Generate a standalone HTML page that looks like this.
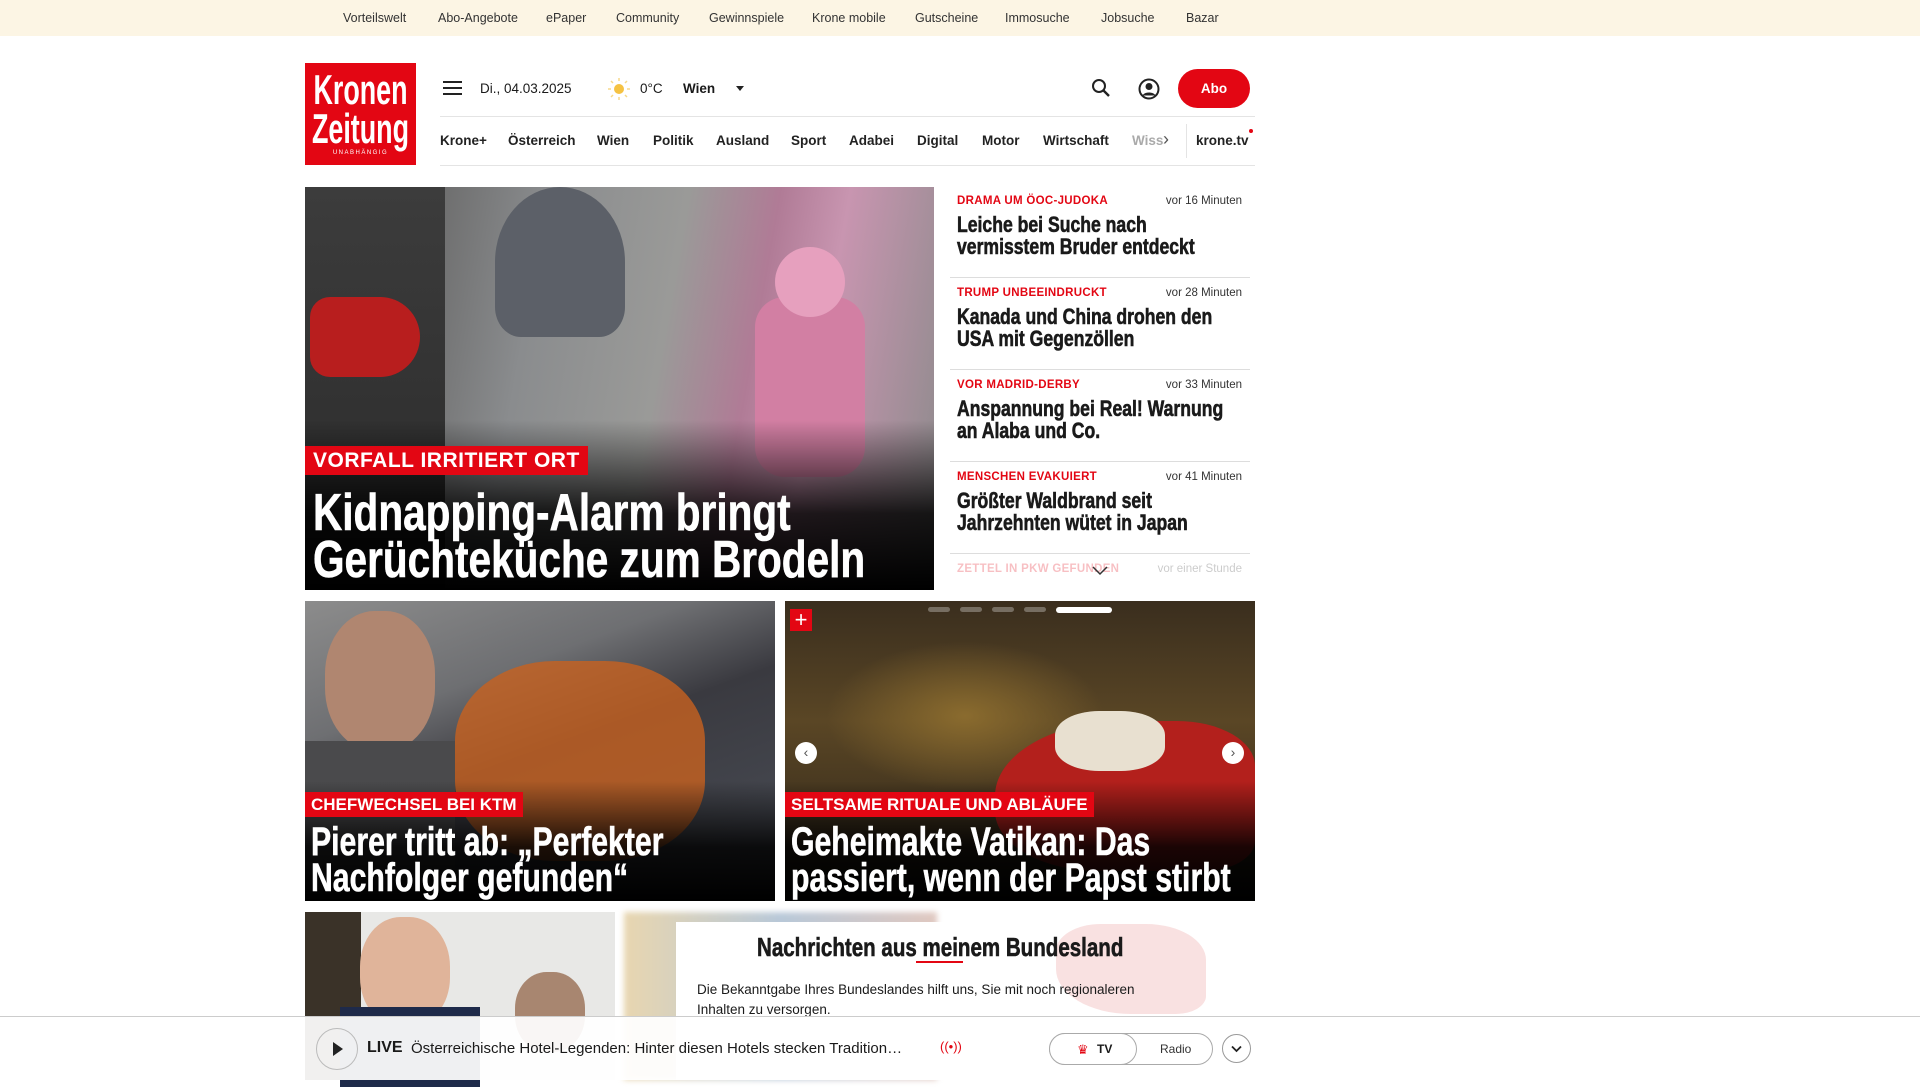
<!DOCTYPE html>
<html><head><meta charset="utf-8">
<style>
*{margin:0;padding:0;box-sizing:border-box}
body{width:1920px;height:1080px;overflow:hidden;background:#fff;font-family:"Liberation Sans",sans-serif;color:#1a1a1a;position:relative}
.abs{position:absolute}
.top{left:0;top:0;width:1920px;height:36px;background:#fcf5e4}
.top span{position:absolute;top:11px;font-size:12.5px;color:#333}
.cond{font-family:"Liberation Sans",sans-serif;font-weight:bold;white-space:nowrap;transform-origin:left top;-webkit-text-stroke:.6px currentColor}
.logo{left:305px;top:63px;width:111px;height:102px;background:#e30613;color:#fff;text-align:center;overflow:hidden}
.nav span{position:absolute;top:133px;font-size:13.5px;font-weight:bold;color:#222}
.hero{left:305px;top:187px;width:629px;height:403px;overflow:hidden;background:linear-gradient(100deg,#4a4a4a 0%,#6b6b6b 18%,#8a8c8e 35%,#9a9a98 55%,#b07b96 68%,#c895b0 78%,#8a8a8a 100%)}
.label{background:#e30613;color:#fff;font-weight:bold;position:absolute}
.shade{position:absolute;left:0;right:0;bottom:0;background:linear-gradient(transparent,rgba(0,0,0,.85) 55%,#000)}
.list .it{position:absolute;left:950px;width:300px;height:92px;border-bottom:1px solid #ddd}
.kick{position:absolute;left:7px;top:9px;color:#e30613;font-size:11.5px;font-weight:bold;letter-spacing:.3px}
.time{position:absolute;right:8px;top:9px;color:#333;font-size:11.5px}
.hl{position:absolute;left:7px;top:28px;font-size:22px;line-height:22px;color:#1a1a1a;transform:scaleX(.8)}
.card{position:absolute;top:601px;width:470px;height:300px;overflow:hidden}
.bar{left:0;top:1016px;width:1920px;height:64px;background:rgba(255,255,255,.93);border-top:1px solid #ccc}
</style></head><body>

<div class="abs top">
<span style="left:343px">Vorteilswelt</span><span style="left:438px">Abo-Angebote</span><span style="left:546px">ePaper</span><span style="left:616px">Community</span><span style="left:709px">Gewinnspiele</span><span style="left:812px">Krone mobile</span><span style="left:915px">Gutscheine</span><span style="left:1005px">Immosuche</span><span style="left:1101px">Jobsuche</span><span style="left:1186px">Bazar</span>
</div>

<div class="abs logo">
<div style="font-weight:bold;font-size:42px;line-height:38px;margin-top:8px;transform:scaleX(.64);white-space:nowrap;margin-left:-40px;margin-right:-40px">Kronen</div>
<div style="font-weight:bold;font-size:42px;line-height:40px;transform:scaleX(.64);white-space:nowrap;margin-left:-40px;margin-right:-40px">Zeitung</div>
<div style="font-size:6px;letter-spacing:1.5px;margin-top:1px">UNABHÄNGIG</div>
</div>

<!-- header row -->
<div class="abs" style="left:443px;top:81px;width:19px;height:2px;background:#222;box-shadow:0 6px 0 #222,0 12px 0 #222"></div>
<div class="abs" style="left:480px;top:81px;font-size:13.5px">Di., 04.03.2025</div>
<svg class="abs" style="left:607px;top:77px" width="24" height="24" viewBox="0 0 24 24"><circle cx="12" cy="12" r="5" fill="#f5c242"/><g stroke="#f7d98a" stroke-width="1.5"><line x1="12" y1="1" x2="12" y2="4"/><line x1="12" y1="20" x2="12" y2="23"/><line x1="1" y1="12" x2="4" y2="12"/><line x1="20" y1="12" x2="23" y2="12"/><line x1="4" y1="4" x2="6" y2="6"/><line x1="18" y1="18" x2="20" y2="20"/><line x1="4" y1="20" x2="6" y2="18"/><line x1="18" y1="6" x2="20" y2="4"/></g></svg>
<div class="abs" style="left:640px;top:81px;font-size:13.5px">0°C</div>
<div class="abs" style="left:683px;top:81px;font-size:13.5px;font-weight:bold">Wien</div>
<div class="abs" style="left:736px;top:86px;border:4px solid transparent;border-top:5px solid #222"></div>
<svg class="abs" style="left:1091px;top:78px" width="20" height="20" viewBox="0 0 20 20"><circle cx="8" cy="8" r="6" fill="none" stroke="#222" stroke-width="2"/><line x1="12.5" y1="12.5" x2="18" y2="18" stroke="#222" stroke-width="2.4"/></svg>
<svg class="abs" style="left:1138px;top:78px" width="22" height="22" viewBox="0 0 22 22"><circle cx="11" cy="11" r="9.5" fill="none" stroke="#222" stroke-width="2"/><circle cx="11" cy="8.5" r="3.5" fill="#222"/><path d="M4.5 17.5c2-4 11-4 13 0" fill="#222"/></svg>
<div class="abs" style="left:1178px;top:69px;width:72px;height:39px;border-radius:20px;background:#e30613;color:#fff;font-weight:bold;font-size:13.5px;text-align:center;line-height:39px">Abo</div>
<div class="abs" style="left:440px;top:116px;width:815px;height:1px;background:#e4e4e4"></div>
<div class="abs" style="left:440px;top:165px;width:815px;height:1px;background:#e4e4e4"></div>
<div class="nav">
<span style="left:440px">Krone+</span><span style="left:508px">Österreich</span><span style="left:597px">Wien</span><span style="left:653px">Politik</span><span style="left:716px">Ausland</span><span style="left:791px">Sport</span><span style="left:849px">Adabei</span><span style="left:917px">Digital</span><span style="left:982px">Motor</span><span style="left:1043px">Wirtschaft</span><span style="left:1132px;color:#aaa">Wiss</span><span style="left:1163px;font-weight:normal;color:#555;font-size:18px;top:129px">›</span><span style="left:1196px">krone.tv</span>
</div>
<div class="abs" style="left:1186px;top:124px;width:1px;height:34px;background:#e4e4e4"></div>
<div class="abs" style="left:1249px;top:129px;width:4px;height:4px;border-radius:2px;background:#e30613"></div>

<!-- hero -->
<div class="abs hero">
<div style="position:absolute;left:0;top:0;width:140px;height:403px;background:linear-gradient(180deg,#3c3c3c,#2a2a2a)"></div>
<div style="position:absolute;left:5px;top:110px;width:110px;height:80px;border-radius:20px 40px 40px 20px;background:#b81e1e"></div>
<div style="position:absolute;left:190px;top:0;width:130px;height:150px;border-radius:50% 50% 20% 20%;background:#5c6068"></div>
<div style="position:absolute;left:450px;top:110px;width:110px;height:180px;border-radius:30px;background:#d27fa3"></div>
<div style="position:absolute;left:470px;top:60px;width:70px;height:70px;border-radius:50%;background:#e6a0be"></div>
<div class="shade" style="height:170px"></div>
<div class="label" style="left:0;top:259px;height:29px;padding:0 8px;font-size:21px;line-height:29px;letter-spacing:.5px">VORFALL IRRITIERT ORT</div>
<div class="cond" style="position:absolute;left:8px;top:303px;color:#fff;font-size:52px;line-height:47px;transform:scaleX(.78)">Kidnapping-Alarm bringt<br>Gerüchteküche zum Brodeln</div>
</div>

<!-- list -->
<div class="list">
<div class="it" style="top:186px"><span class="kick">DRAMA UM ÖOC-JUDOKA</span><span class="time">vor 16 Minuten</span><div class="hl cond">Leiche bei Suche nach<br>vermisstem Bruder entdeckt</div></div>
<div class="it" style="top:278px"><span class="kick">TRUMP UNBEEINDRUCKT</span><span class="time">vor 28 Minuten</span><div class="hl cond">Kanada und China drohen den<br>USA mit Gegenzöllen</div></div>
<div class="it" style="top:370px"><span class="kick">VOR MADRID-DERBY</span><span class="time">vor 33 Minuten</span><div class="hl cond">Anspannung bei Real! Warnung<br>an Alaba und Co.</div></div>
<div class="it" style="top:462px"><span class="kick">MENSCHEN EVAKUIERT</span><span class="time">vor 41 Minuten</span><div class="hl cond">Größter Waldbrand seit<br>Jahrzehnten wütet in Japan</div></div>
<div class="it" style="top:554px;border:none;opacity:.25;height:30px"><span class="kick">ZETTEL IN PKW GEFUNDEN</span><span class="time">vor einer Stunde</span></div>
<svg class="abs" style="left:1092px;top:566px" width="16" height="10" viewBox="0 0 16 10"><path d="M1 1l7 7 7-7" fill="none" stroke="#333" stroke-width="1.5"/></svg>
</div>

<!-- cards -->
<div class="card" style="left:305px;background:linear-gradient(160deg,#8c8c8c 0%,#6e6f72 30%,#3a3a40 50%,#4b4f58 100%)">
<div style="position:absolute;left:20px;top:10px;width:110px;height:140px;border-radius:45%;background:#b08670"></div>
<div style="position:absolute;left:0;top:140px;width:150px;height:160px;background:#4a4a4c"></div>
<div style="position:absolute;left:150px;top:60px;width:250px;height:200px;border-radius:40%;background:#c8611f;opacity:.8"></div>
<div class="shade" style="height:120px"></div>
<div class="label" style="left:0;top:191px;height:25px;padding:0 6px;font-size:17px;line-height:25px">CHEFWECHSEL BEI KTM</div>
<div class="cond" style="position:absolute;left:6px;top:223px;color:#fff;font-size:40px;line-height:36px;transform:scaleX(.755)">Pierer tritt ab: „Perfekter<br>Nachfolger gefunden“</div>
</div>
<div class="card" style="left:785px;background:linear-gradient(180deg,#3a2e1e,#5a4625 40%,#2a2218)">
<div style="position:absolute;left:40px;top:40px;width:280px;height:150px;background:radial-gradient(ellipse,#8a6b2e,transparent 70%)"></div>
<div style="position:absolute;left:210px;top:120px;width:260px;height:150px;border-radius:50% 30% 20% 40%;background:#b3201c"></div>
<div style="position:absolute;left:270px;top:110px;width:110px;height:60px;border-radius:40%;background:#e8e0d0"></div>
<div class="shade" style="height:120px"></div>
<div style="position:absolute;left:5px;top:8px;width:22px;height:22px;background:#e30613;color:#fff;font-size:22px;line-height:21px;text-align:center">+</div>
<div style="position:absolute;left:143px;top:6px;width:22px;height:5px;border-radius:3px;background:rgba(255,255,255,.3);box-shadow:32px 0 0 rgba(255,255,255,.3),64px 0 0 rgba(255,255,255,.3),96px 0 0 rgba(255,255,255,.3)"></div>
<div style="position:absolute;left:271px;top:6px;width:56px;height:6px;border-radius:3px;background:#fff"></div>
<div style="position:absolute;left:10px;top:141px;width:22px;height:22px;border-radius:50%;background:#fff;color:#555;font-size:14px;text-align:center;line-height:21px">‹</div>
<div style="position:absolute;left:437px;top:141px;width:22px;height:22px;border-radius:50%;background:#fff;color:#555;font-size:14px;text-align:center;line-height:21px">›</div>
<div class="label" style="left:0;top:191px;height:25px;padding:0 6px;font-size:17px;line-height:25px">SELTSAME RITUALE UND ABLÄUFE</div>
<div class="cond" style="position:absolute;left:6px;top:223px;color:#fff;font-size:40px;line-height:36px;transform:scaleX(.755)">Geheimakte Vatikan: Das<br>passiert, wenn der Papst stirbt</div>
</div>

<!-- third row -->
<div class="abs" style="left:305px;top:912px;width:310px;height:168px;background:linear-gradient(90deg,#3a3228 0 18%,#e8e8e6 18%)">
<div style="position:absolute;left:55px;top:5px;width:90px;height:110px;border-radius:45%;background:#e0b49a"></div>
<div style="position:absolute;left:35px;top:95px;width:140px;height:80px;background:#1e2a4a"></div>
<div style="position:absolute;left:210px;top:60px;width:70px;height:80px;border-radius:45%;background:#a88670"></div>
</div>
<div class="abs" style="left:624px;top:912px;width:313px;height:168px;background:linear-gradient(90deg,#e8d6b0,#b8c8d8,#e0c8c0);filter:blur(3px)"></div>
<div class="abs" style="left:676px;top:922px;width:579px;height:158px;background:#fff">
<div style="position:absolute;left:380px;top:2px;width:150px;height:90px;background:#f7d9d9;border-radius:30% 40% 20% 50%;opacity:.8"></div>
<div class="cond" style="position:absolute;left:81px;top:10px;font-size:26px;transform:scaleX(.79)">Nachrichten aus meinem Bundesland</div>
<div style="position:absolute;left:240px;top:39px;width:47px;height:2px;background:#e30613"></div>
<div style="position:absolute;left:21px;top:58px;font-size:13.5px;line-height:20px">Die Bekanntgabe Ihres Bundeslandes hilft uns, Sie mit noch regionaleren<br>Inhalten zu versorgen.</div>
</div>

<!-- bottom bar -->
<div class="abs bar">
<div style="position:absolute;left:316px;top:11px;width:42px;height:42px;border-radius:50%;border:1px solid #bbb"></div>
<div style="position:absolute;left:333px;top:25px;border-left:10px solid #222;border-top:7px solid transparent;border-bottom:7px solid transparent"></div>
<div style="position:absolute;left:367px;top:22px;font-size:16px;font-weight:bold">LIVE</div>
<div style="position:absolute;left:411px;top:23px;font-size:15px">Österreichische Hotel-Legenden: Hinter diesen Hotels stecken Tradition…</div>
<div style="position:absolute;left:940px;top:22px;font-size:13px;color:#e30613">((•))</div>
<div style="position:absolute;left:1049px;top:16px;width:164px;height:32px;border:1px solid #aaa;border-radius:16px"></div>
<div style="position:absolute;left:1049px;top:16px;width:88px;height:32px;border:1px solid #aaa;border-radius:16px;background:#fff"></div>
<div style="position:absolute;left:1077px;top:25px;color:#e30613;font-size:13px">♛</div>
<div style="position:absolute;left:1097px;top:25px;font-size:12px;font-weight:bold">TV</div>
<div style="position:absolute;left:1160px;top:25px;font-size:12px;color:#333">Radio</div>
<div style="position:absolute;left:1222px;top:17px;width:29px;height:29px;border-radius:50%;border:1px solid #999"></div>
<svg style="position:absolute;left:1231px;top:28px" width="11" height="8" viewBox="0 0 11 8"><path d="M1 1.5l4.5 4.5 4.5-4.5" fill="none" stroke="#222" stroke-width="1.8"/></svg>
</div>
</body></html>
